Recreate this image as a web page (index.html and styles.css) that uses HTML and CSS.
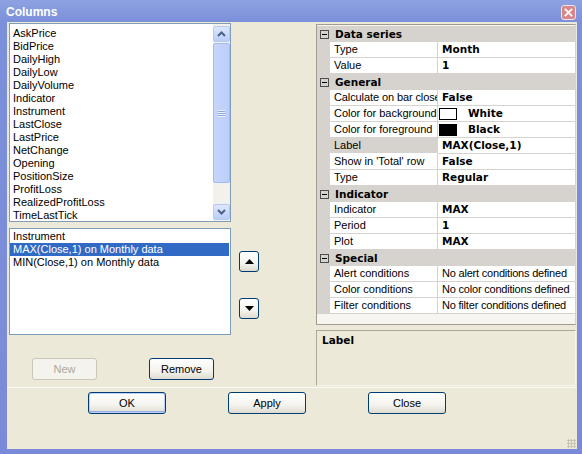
FILE: index.html
```html
<html>
<head>
    <title>Columns</title>
    <meta charset="UTF-8">
    <link rel="stylesheet" href="styles.css">
</head>

<body>
    <div class="window">
        <div class="titlebar">
            <span class="title">Columns</span>
            <span class="close">
                <svg width="15" height="15" viewBox="0 0 15 15">
                    <path d="M4 4 L11 11 M11 4 L4 11" stroke="white" stroke-width="2" stroke-linecap="square"/>
                </svg>
            </span>
        </div>
        <div class="client">
            <div class="main">
                <div class="leftcol">
                    <div class="list avail">
                        <ul class="items">
                            <li>AskPrice</li>
                            <li>BidPrice</li>
                            <li>DailyHigh</li>
                            <li>DailyLow</li>
                            <li>DailyVolume</li>
                            <li>Indicator</li>
                            <li>Instrument</li>
                            <li>LastClose</li>
                            <li>LastPrice</li>
                            <li>NetChange</li>
                            <li>Opening</li>
                            <li>PositionSize</li>
                            <li>ProfitLoss</li>
                            <li>RealizedProfitLoss</li>
                            <li>TimeLastTick</li>
                        </ul>
                        <div class="vscroll">
                            <div class="sbtn">
                                <svg width="9" height="6" viewBox="0 0 9 6"><path d="M1 5 L4.5 1.5 L8 5" fill="none" stroke="#4d6185" stroke-width="2"/></svg>
                            </div>
                            <div class="thumb"><span class="grip"></span></div>
                            <div class="track"></div>
                            <div class="sbtn">
                                <svg width="9" height="6" viewBox="0 0 9 6"><path d="M1 1 L4.5 4.5 L8 1" fill="none" stroke="#4d6185" stroke-width="2"/></svg>
                            </div>
                        </div>
                    </div>
                    <div class="list chosen">
                        <ul class="items">
                            <li>Instrument</li>
                            <li class="sel">MAX(Close,1) on Monthly data</li>
                            <li>MIN(Close,1) on Monthly data</li>
                        </ul>
                    </div>
                    <div class="editbtns">
                        <button class="btn small disabled">New</button>
                        <button class="btn small">Remove</button>
                    </div>
                </div>

                <div class="movebtns">
                    <button class="btn arrow">
                        <svg width="9" height="5" viewBox="0 0 9 5"><path d="M0 5 L4.5 0 L9 5 Z" fill="black"/></svg>
                    </button>
                    <button class="btn arrow down">
                        <svg width="9" height="5" viewBox="0 0 9 5"><path d="M0 0 L9 0 L4.5 5 Z" fill="black"/></svg>
                    </button>
                </div>

                <div class="rightcol">
                    <div class="props">
                        <div class="row cat"><span class="pm"></span><span class="catname">Data series</span></div>
                        <div class="row"><span class="name">Type</span><span class="val">Month</span></div>
                        <div class="row"><span class="name">Value</span><span class="val">1</span></div>
                        <div class="row cat"><span class="pm"></span><span class="catname">General</span></div>
                        <div class="row"><span class="name clipped">Calculate on bar close</span><span class="val">False</span></div>
                        <div class="row"><span class="name">Color for background</span><span class="val"><span class="swatch white"></span>White</span></div>
                        <div class="row"><span class="name">Color for foreground</span><span class="val"><span class="swatch black"></span>Black</span></div>
                        <div class="row selrow"><span class="name">Label</span><span class="val">MAX(Close,1)</span></div>
                        <div class="row"><span class="name">Show in 'Total' row</span><span class="val">False</span></div>
                        <div class="row"><span class="name">Type</span><span class="val">Regular</span></div>
                        <div class="row cat"><span class="pm"></span><span class="catname">Indicator</span></div>
                        <div class="row"><span class="name">Indicator</span><span class="val">MAX</span></div>
                        <div class="row"><span class="name">Period</span><span class="val">1</span></div>
                        <div class="row"><span class="name">Plot</span><span class="val">MAX</span></div>
                        <div class="row cat"><span class="pm"></span><span class="catname">Special</span></div>
                        <div class="row"><span class="name">Alert conditions</span><span class="val plain">No alert conditions defined</span></div>
                        <div class="row"><span class="name">Color conditions</span><span class="val plain">No color conditions defined</span></div>
                        <div class="row"><span class="name">Filter conditions</span><span class="val plain">No filter conditions defined</span></div>
                    </div>
                    <div class="desc">Label</div>
                </div>
            </div>

            <div class="footer">
                <button class="btn wide default">OK</button>
                <button class="btn wide">Apply</button>
                <button class="btn wide">Close</button>
                <span class="sizegrip"></span>
            </div>
        </div>
    </div>
</body>
</html>
```

FILE: styles.css
```css
html, body {
    margin: 0;
    padding: 0;
    background-color: #7c90db;
}

body {
    font-family: "Liberation Sans", Arial, sans-serif;
    font-size: 11px;
    color: black;
}

.window {
    width: 582px;
    height: 454px;
    box-sizing: border-box;
    padding: 0 5px 5px 7px;
    background: linear-gradient(to bottom, #8ea2e2 0px, #7b90da 22px, #7b8ad8 100%);
}

.titlebar {
    height: 22px;
    margin-left: -7px;
    margin-right: -5px;
    display: flex;
    align-items: center;
    justify-content: space-between;
}

.title {
    color: white;
    font-weight: bold;
    font-size: 12px;
    padding-left: 6px;
    padding-top: 2px;
}

.close {
    width: 15px;
    height: 15px;
    margin-right: 6px;
    margin-top: 2px;
    background-color: #d8878a;
    border: 1px solid #f2e4ea;
    border-radius: 3px;
    box-sizing: border-box;
    display: flex;
    align-items: center;
    justify-content: center;
}

.close svg {
    width: 13px;
    height: 13px;
}

.client {
    height: 427px;
    background-color: #ece9d8;
    display: flex;
    flex-direction: column;
}

.main {
    height: 365px;
    display: flex;
    align-items: flex-start;
    padding-top: 1px;
    box-sizing: border-box;
}

/* left side */

.leftcol {
    width: 222px;
    margin-left: 2px;
}

.list {
    background-color: white;
    border: 1px solid #7f9db9;
    box-sizing: border-box;
    display: flex;
}

.avail {
    height: 199px;
}

.chosen {
    height: 107px;
    margin-top: 6px;
}

.items {
    list-style: none;
    margin: 0;
    padding: 3px 0 0 0;
    flex: 1;
}

.chosen .items {
    padding-top: 1px;
}

.items li {
    height: 13px;
    line-height: 13px;
    padding-left: 3px;
    white-space: nowrap;
}

.items li.sel {
    background-color: #316ac5;
    color: white;
    margin-right: 1px;
}

.vscroll {
    width: 17px;
    display: flex;
    flex-direction: column;
    background-color: #f3f1ec;
    padding: 2px 0 0 0;
}

.sbtn {
    height: 16px;
    margin-bottom: 1px;
    background: linear-gradient(to bottom, #dde8fe, #b9cdf8);
    border: 1px solid #b6c9f2;
    border-radius: 2px;
    box-sizing: border-box;
    display: flex;
    align-items: center;
    justify-content: center;
}

.thumb {
    height: 140px;
    background: linear-gradient(to right, #c6d6fc, #bccffa);
    border: 1px solid #a4bbee;
    border-radius: 2px;
    box-sizing: border-box;
    display: flex;
    align-items: center;
    justify-content: center;
}

.grip {
    width: 7px;
    height: 7px;
    background: repeating-linear-gradient(to bottom, #eef3fe 0px, #eef3fe 1px, #8ea6e0 1px, #8ea6e0 2px);
}

.track {
    flex: 1;
}

.editbtns {
    margin-top: 23px;
    padding-left: 23px;
    display: flex;
    gap: 52px;
}

/* buttons */

.btn {
    font-family: "Liberation Sans", Arial, sans-serif;
    font-size: 11px;
    color: black;
    background: linear-gradient(to bottom, #ffffff 0%, #f4f3ee 60%, #dedbd0 100%);
    border: 1px solid #003c74;
    border-radius: 3px;
    padding: 0;
    box-sizing: border-box;
}

.btn.small {
    width: 65px;
    height: 22px;
}

.btn.disabled {
    color: #aca899;
    border-color: #c9c7ba;
    background: #f4f3ee;
}

.btn.wide {
    width: 78px;
    height: 22px;
}

.btn.default {
    box-shadow: inset 0 0 0 1px #bccffa, inset 0 -1px 0 1px #97aee8;
}

.movebtns {
    width: 20px;
    margin-left: 8px;
    padding-top: 228px;
    display: flex;
    flex-direction: column;
}

.btn.arrow {
    width: 20px;
    height: 21px;
    display: flex;
    align-items: center;
    justify-content: center;
}

.btn.arrow.down {
    margin-top: 26px;
}

/* property grid */

.rightcol {
    width: 260px;
    margin-left: 57px;
    padding-top: 1px;
}

.props {
    height: 301px;
    border: 1px solid #a09d90;
    border-right-color: #d6d3ce;
    padding-top: 1px;
    box-sizing: border-box;
    background-color: #f6f5f0;
}

.row {
    height: 16px;
    display: flex;
    background-color: #d6d3ce;
    padding-left: 13px;
    box-sizing: border-box;
}

.row.cat {
    padding-left: 2px;
    align-items: center;
    font-weight: bold;
    font-family: "DejaVu Sans", sans-serif;
    font-size: 10.5px;
}

.pm {
    width: 9px;
    height: 9px;
    border: 1px solid #4d4d4d;
    box-sizing: border-box;
    margin-right: 6px;
    position: relative;
    margin-left: 1px;
}

.pm::after {
    content: "";
    position: absolute;
    left: 1px;
    top: 3px;
    width: 5px;
    height: 1px;
    background-color: black;
}

.name {
    width: 108px;
    background-color: white;
    border-bottom: 1px solid #d6d3ce;
    border-right: 1px solid #d6d3ce;
    padding-left: 4px;
    box-sizing: border-box;
    line-height: 15px;
    white-space: nowrap;
    overflow: hidden;
}

.name.clipped {
    letter-spacing: -0.1px;
}

.selrow .name {
    background-color: #d6d3ce;
    border-bottom-color: white;
}

.val {
    flex: 1;
    background-color: white;
    border-bottom: 1px solid #d6d3ce;
    padding-left: 4px;
    line-height: 15px;
    font-weight: bold;
    font-family: "DejaVu Sans", sans-serif;
    font-size: 10.5px;
    display: flex;
    align-items: center;
    white-space: nowrap;
    overflow: hidden;
}

.val.plain {
    font-weight: normal;
    font-family: "Liberation Sans", Arial, sans-serif;
    font-size: 11px;
    letter-spacing: -0.2px;
}

.swatch {
    width: 18px;
    height: 12px;
    box-sizing: border-box;
    border: 1px solid black;
    margin-right: 11px;
    margin-left: -3px;
}

.swatch.white {
    background-color: white;
}

.swatch.black {
    background-color: black;
}

.desc {
    height: 56px;
    margin-top: 5px;
    border: 1px solid #aca899;
    border-bottom-color: #f6f5f0;
    border-right-color: #f6f5f0;
    box-sizing: border-box;
    padding: 3px 0 0 5px;
    font-weight: bold;
    font-family: "DejaVu Sans", sans-serif;
    font-size: 10.5px;
}

/* footer */

.footer {
    flex: 1;
    border-top: 1px solid #fbfaf6;
    padding: 4px 0 0 81px;
    display: flex;
    align-items: flex-start;
    gap: 62px;
    position: relative;
}

.sizegrip {
    position: absolute;
    right: 1px;
    bottom: 1px;
    width: 9px;
    height: 9px;
    background: radial-gradient(circle, #c7c4b6 1px, transparent 1.2px) 0 0 / 3px 3px;
}
```
